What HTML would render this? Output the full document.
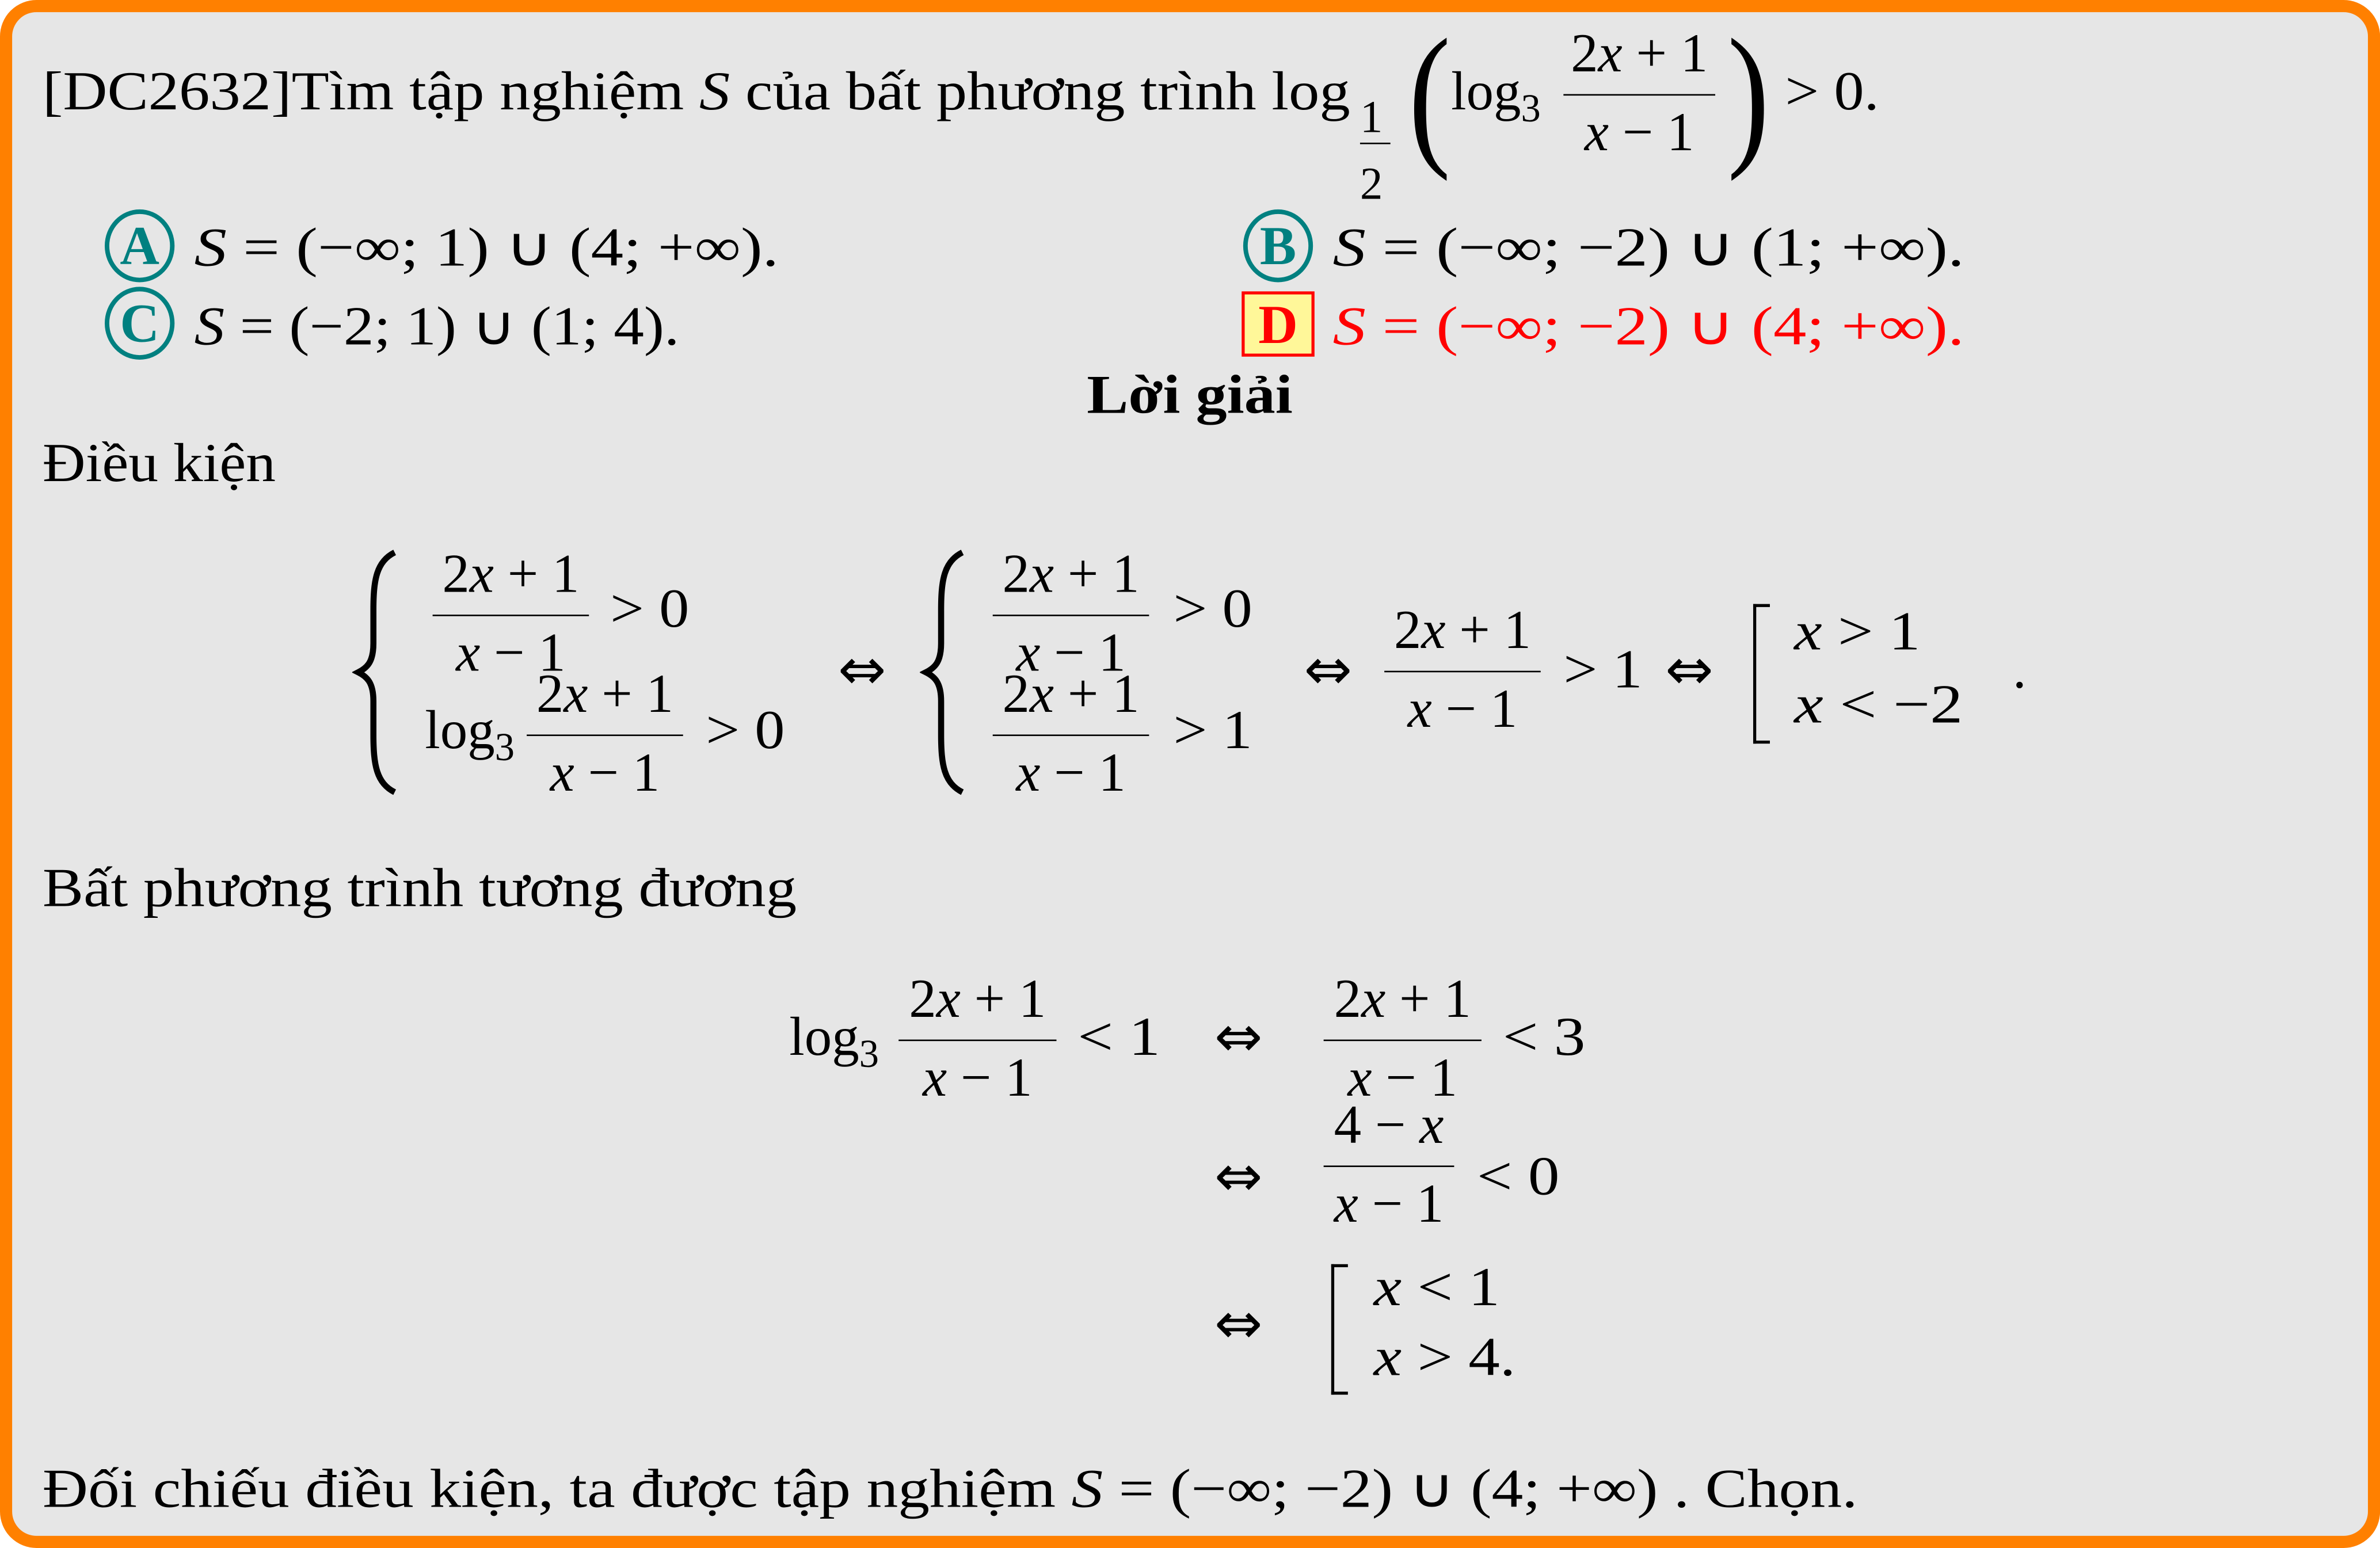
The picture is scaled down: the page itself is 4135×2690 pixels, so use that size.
<!DOCTYPE html>
<html><head><meta charset="utf-8">
<style>
html,body{margin:0;padding:0;width:4135px;height:2690px;overflow:hidden;background:#fff}
#w{position:absolute;left:0;top:0;width:1568px;height:1020px;transform:scale(2.6372);transform-origin:0 0}
#box{position:absolute;left:0;top:0;width:1552px;height:1004px;border:8px solid #ff8000;border-radius:24px;background:#e6e6e6}
.t{position:absolute;white-space:nowrap;font-family:"Liberation Serif",serif;font-size:36px;line-height:36px;color:#000;transform-origin:0 0}
i{font-style:italic}
.f{position:absolute;border-top:1.6px solid #000;height:0}
.f .n,.f .d{position:absolute;left:-20px;right:-20px;text-align:center;white-space:nowrap;font-family:"Liberation Serif",serif;font-size:36px;line-height:36px}
.f .n{top:-46px}.f .d{top:6px}
.c{position:absolute;border:3px solid #008080;border-radius:50%;color:#008080;font-family:"Liberation Serif",serif;font-weight:bold;font-size:36px;text-align:center;box-sizing:border-box}
.red{color:#ff0000}
.ar{font-family:"DejaVu Sans",sans-serif;font-size:38px}
</style></head><body><div id="w"><div id="box"></div>

<div class="t" style="left:28px;top:42px;transform:scaleX(1.124)">[DC2632]Tìm tập nghiệm <i>S</i> của bất phương trình log</div>
<div class="t" style="left:896px;top:60px;font-size:30px">1</div>
<div style="position:absolute;left:896px;top:94px;width:20px;border-top:1.6px solid #000"></div>
<div class="t" style="left:896px;top:104px;font-size:30px">2</div>
<div class="t" style="left:928px;top:8px;font-size:104px;line-height:110px;transform:scaleX(0.8)">(</div>
<div class="t" style="left:956px;top:42px">log<span style="font-size:26px;position:relative;top:8px">3</span></div>
<div class="f" style="left:1030px;top:62px;width:100px"><div class="n">2<i>x</i> + 1</div><div class="d"><i>x</i> − 1</div></div>
<div class="t" style="left:1138px;top:8px;font-size:104px;line-height:110px;transform:scaleX(0.8)">)</div>
<div class="t" style="left:1176px;top:42px;transform:scaleX(1.1)">&gt; 0.</div>

<div class="c" style="left:69px;top:138px;width:46px;height:48px;line-height:42px">A</div>
<div class="t" style="left:128px;top:145px;transform:scaleX(1.19)"><i>S</i> = (−∞; 1) ∪ (4; +∞).</div>
<div class="c" style="left:819px;top:138px;width:46px;height:48px;line-height:42px">B</div>
<div class="t" style="left:878px;top:145px;transform:scaleX(1.21)"><i>S</i> = (−∞; −2) ∪ (1; +∞).</div>
<div class="c" style="left:69px;top:189px;width:46px;height:48px;line-height:42px">C</div>
<div class="t" style="left:128px;top:197px;transform:scaleX(1.11)"><i>S</i> = (−2; 1) ∪ (1; 4).</div>
<div style="position:absolute;left:818px;top:192px;width:48px;height:43px;box-sizing:border-box;border:2px solid #ff0000;background:#fff799;color:#ff0000;font-family:'Liberation Serif',serif;font-weight:bold;font-size:36px;line-height:40px;text-align:center">D</div>
<div class="t red" style="left:878px;top:197px;transform:scaleX(1.21)"><i>S</i> = (−∞; −2) ∪ (4; +∞).</div>

<div class="t" style="left:716px;top:242px;font-weight:bold;transform:scaleX(1.14)">Lời giải</div>
<div class="t" style="left:28px;top:287px;transform:scaleX(1.09)">Điều kiện</div>

<svg style="position:absolute;left:232px;top:362px" width="34" height="162" viewBox="0 0 34 162"><path d="M28 2 C16 8 14 20 14 40 L14 62 C14 74 10 78 4 81 C10 84 14 88 14 100 L14 122 C14 142 16 154 28 160" fill="none" stroke="#000" stroke-width="4"/></svg>
<div class="f" style="left:285px;top:405px;width:103px"><div class="n">2<i>x</i> + 1</div><div class="d"><i>x</i> − 1</div></div>
<div class="t" style="left:402px;top:383px;transform:scaleX(1.1)">&gt; 0</div>
<div class="t" style="left:280px;top:463px">log<span style="font-size:26px;position:relative;top:8px">3</span></div>
<div class="f" style="left:347px;top:484px;width:103px"><div class="n">2<i>x</i> + 1</div><div class="d"><i>x</i> − 1</div></div>
<div class="t" style="left:465px;top:463px;transform:scaleX(1.1)">&gt; 0</div>
<div class="t ar" style="left:552px;top:423px">⇔</div>
<svg style="position:absolute;left:606px;top:362px" width="34" height="162" viewBox="0 0 34 162"><path d="M28 2 C16 8 14 20 14 40 L14 62 C14 74 10 78 4 81 C10 84 14 88 14 100 L14 122 C14 142 16 154 28 160" fill="none" stroke="#000" stroke-width="4"/></svg>
<div class="f" style="left:654px;top:405px;width:103px"><div class="n">2<i>x</i> + 1</div><div class="d"><i>x</i> − 1</div></div>
<div class="t" style="left:773px;top:383px;transform:scaleX(1.1)">&gt; 0</div>
<div class="f" style="left:654px;top:484px;width:103px"><div class="n">2<i>x</i> + 1</div><div class="d"><i>x</i> − 1</div></div>
<div class="t" style="left:773px;top:463px;transform:scaleX(1.1)">&gt; 1</div>
<div class="t ar" style="left:859px;top:423px">⇔</div>
<div class="f" style="left:912px;top:442px;width:103px"><div class="n">2<i>x</i> + 1</div><div class="d"><i>x</i> − 1</div></div>
<div class="t" style="left:1030px;top:423px;transform:scaleX(1.1)">&gt; 1</div>
<div class="t ar" style="left:1097px;top:423px">⇔</div>
<div style="position:absolute;left:1155px;top:398px;width:9px;height:88px;border:2.5px solid #000;border-right:none"></div>
<div class="t" style="left:1182px;top:398px;transform:scaleX(1.15)"><i>x</i> &gt; 1</div>
<div class="t" style="left:1182px;top:446px;transform:scaleX(1.2)"><i>x</i> &lt; −2</div>
<div class="t" style="left:1326px;top:423px">.</div>

<div class="t" style="left:28px;top:567px;transform:scaleX(1.125)">Bất phương trình tương đương</div>

<div class="t" style="left:520px;top:665px">log<span style="font-size:26px;position:relative;top:8px">3</span></div>
<div class="f" style="left:592px;top:685px;width:104px"><div class="n">2<i>x</i> + 1</div><div class="d"><i>x</i> − 1</div></div>
<div class="t" style="left:710px;top:665px;transform:scaleX(1.15)">&lt; 1</div>
<div class="t ar" style="left:800px;top:665px">⇔</div>
<div class="f" style="left:872px;top:685px;width:104px"><div class="n">2<i>x</i> + 1</div><div class="d"><i>x</i> − 1</div></div>
<div class="t" style="left:990px;top:665px;transform:scaleX(1.15)">&lt; 3</div>
<div class="t ar" style="left:800px;top:757px">⇔</div>
<div class="f" style="left:872px;top:768px;width:86px"><div class="n">4 − <i>x</i></div><div class="d"><i>x</i> − 1</div></div>
<div class="t" style="left:973px;top:757px;transform:scaleX(1.15)">&lt; 0</div>
<div class="t ar" style="left:800px;top:854px">⇔</div>
<div style="position:absolute;left:877px;top:833px;width:9px;height:82px;border:2.5px solid #000;border-right:none"></div>
<div class="t" style="left:905px;top:830px;transform:scaleX(1.15)"><i>x</i> &lt; 1</div>
<div class="t" style="left:905px;top:876px;transform:scaleX(1.15)"><i>x</i> &gt; 4.</div>

<div class="t" style="left:28px;top:963px;transform:scaleX(1.154)">Đối chiếu điều kiện, ta được tập nghiệm <i>S</i> = (−∞; −2) ∪ (4; +∞) . Chọn.</div>
</div></body></html>
